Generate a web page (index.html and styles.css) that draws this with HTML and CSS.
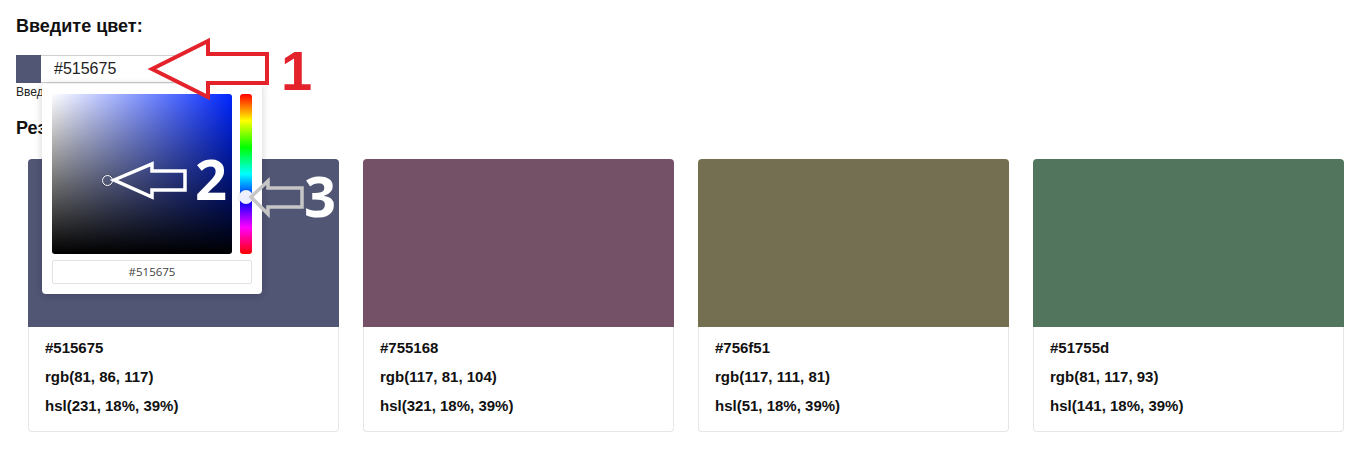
FILE: index.html
```html
<!DOCTYPE html>
<html lang="ru">
<head>
<meta charset="utf-8">
<title>Цвет</title>
<link rel="stylesheet" href="styles.css">
</head>
<body>
<div class="page">
  <h2 class="title">Введите цвет:</h2>
  <div class="field">
    <div class="field-row">
      <span class="swatch"></span>
      <input class="color-input" type="text" value="#515675">
    </div>
    <div class="hint">Введите код цвета или же откройте палитру</div>

    <div class="picker">
      <div class="picker-top">
        <div class="sv">
          <span class="sv-handle"></span>
        </div>
        <div class="hue">
          <span class="hue-handle"></span>
        </div>
      </div>
      <div class="picker-hex">#515675</div>
    </div>
  </div>

  <h2 class="title result-title">Результат:</h2>

  <div class="cards">
    <div class="card">
      <div class="card-color" style="background:#515675"></div>
      <div class="card-info">
        <p class="line">#515675</p>
        <p class="line">rgb(81, 86, 117)</p>
        <p class="line">hsl(231, 18%, 39%)</p>
      </div>
    </div>
    <div class="card">
      <div class="card-color" style="background:#755168"></div>
      <div class="card-info">
        <p class="line">#755168</p>
        <p class="line">rgb(117, 81, 104)</p>
        <p class="line">hsl(321, 18%, 39%)</p>
      </div>
    </div>
    <div class="card">
      <div class="card-color" style="background:#756f51"></div>
      <div class="card-info">
        <p class="line">#756f51</p>
        <p class="line">rgb(117, 111, 81)</p>
        <p class="line">hsl(51, 18%, 39%)</p>
      </div>
    </div>
    <div class="card">
      <div class="card-color" style="background:#51755d"></div>
      <div class="card-info">
        <p class="line">#51755d</p>
        <p class="line">rgb(81, 117, 93)</p>
        <p class="line">hsl(141, 18%, 39%)</p>
      </div>
    </div>
  </div>
</div>

<svg class="annotations" width="1364" height="458" viewBox="0 0 1364 458" xmlns="http://www.w3.org/2000/svg">
  <polygon points="152,69 208,41 208,54 267,54 267,83 208,83 208,97" fill="#ffffff" stroke="#e3222b" stroke-width="4" stroke-linejoin="miter"/>
  <text x="281" y="90" class="num num-red">1</text>

  <polygon points="114,180 152,164 152,171 185,171 185,190 152,190 152,197" fill="none" stroke="#ffffff" stroke-width="3.5" stroke-linejoin="miter"/>
  <text x="195" y="200" class="num num-white">2</text>

  <polygon points="251,197 268,181 268,188 302,188 302,207 268,207 268,214" fill="none" stroke="#c6c6c6" stroke-width="3.5" stroke-linejoin="miter"/>
  <text x="304" y="217" class="num num-white">3</text>
</svg>
</body>
</html>
```

FILE: styles.css
```css
html, body {
  margin: 0;
  padding: 0;
  background: #ffffff;
}

body {
  font-family: "Liberation Sans", Arial, sans-serif;
  color: #111;
  position: relative;
  width: 1364px;
  height: 458px;
  overflow: hidden;
}

.page {
  padding: 16px;
}

.title {
  margin: 0;
  font-size: 18px;
  line-height: 21px;
  font-weight: bold;
  color: #111;
}

.field {
  position: relative;
  margin-top: 18px;
}

.field-row {
  display: flex;
  height: 28px;
}

.swatch {
  width: 25px;
  height: 28px;
  background: #515675;
  flex: none;
}

.color-input {
  box-sizing: border-box;
  width: 226px;
  height: 28px;
  margin: 0;
  padding: 0 12px 0 13px;
  border: 1px solid #cfcfcf;
  border-left: none;
  outline: none;
  font-family: "Liberation Sans", Arial, sans-serif;
  font-size: 16px;
  color: #222;
  background: #fff;
}

.hint {
  margin-top: 2px;
  font-size: 12px;
  line-height: 14px;
  color: #222;
  white-space: nowrap;
}

.picker {
  position: absolute;
  left: 26px;
  top: 29px;
  width: 220px;
  box-sizing: border-box;
  padding: 10px;
  background: #fff;
  border-radius: 4px;
  box-shadow: 0 1px 8px rgba(0, 0, 0, 0.18);
  z-index: 2;
}

.picker-top {
  display: flex;
  gap: 8px;
}

.sv {
  position: relative;
  width: 180px;
  height: 160px;
  border-radius: 3px;
  background:
    linear-gradient(to bottom, rgba(0,0,0,0), #000),
    linear-gradient(to right, #fff, rgba(255,255,255,0)),
    rgb(0, 38, 255);
}

.sv-handle {
  position: absolute;
  left: 50px;
  top: 81px;
  width: 9px;
  height: 9px;
  border: 1.5px solid #fff;
  border-radius: 50%;
  box-shadow: 0 0 1px rgba(0,0,0,0.6);
}

.hue {
  position: relative;
  width: 12px;
  height: 160px;
  border-radius: 3px;
  background: linear-gradient(to bottom, #ff0000 0%, #ffff00 16.66%, #00ff00 33.33%, #00ffff 50%, #0000ff 66.66%, #ff00ff 83.33%, #ff0000 100%);
}

.hue-handle {
  position: absolute;
  left: -1px;
  top: 96px;
  width: 14px;
  height: 14px;
  border-radius: 50%;
  background: rgba(250, 250, 255, 0.95);
  box-shadow: 0 0 2px rgba(0,0,0,0.3);
}

.picker-hex {
  margin-top: 6px;
  height: 24px;
  box-sizing: border-box;
  border: 1px solid #e2e2e2;
  border-radius: 2px;
  font-family: "Open Sans", "DejaVu Sans", sans-serif;
  font-size: 11.5px;
  line-height: 22px;
  text-align: center;
  color: #444;
}

.result-title {
  margin-top: 19px;
}

.cards {
  display: grid;
  grid-template-columns: repeat(4, 311px);
  gap: 24px;
  margin: 20px 0 0 12px;
}

.card {
  border-radius: 4px;
}

.card-color {
  height: 168px;
  border-radius: 4px 4px 0 0;
}

.card-info {
  border: 1px solid #e6e6e6;
  border-top: none;
  border-radius: 0 0 4px 4px;
  padding: 6px 16px 11px;
}

.line {
  margin: 0;
  font-size: 15px;
  line-height: 29px;
  font-weight: bold;
  color: #111;
}

.annotations {
  position: absolute;
  left: 0;
  top: 0;
  z-index: 5;
  pointer-events: none;
}

.num {
  font-weight: bold;
  font-size: 56px;
}

.num-red {
  fill: #e3222b;
  font-family: "Liberation Sans", Arial, sans-serif;
}

.num-white {
  fill: #ffffff;
  font-family: "Open Sans", "DejaVu Sans", sans-serif;
}
```
